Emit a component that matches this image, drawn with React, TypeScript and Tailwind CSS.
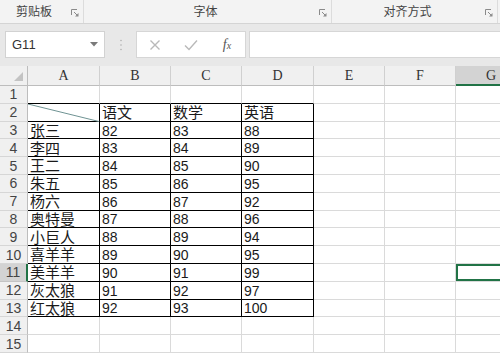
import type { ReactNode } from 'react';

type Row = [string, string, string, string];

const data: Row[] = [
  ['张三', '82', '83', '88'],
  ['李四', '83', '84', '89'],
  ['王二', '84', '85', '90'],
  ['朱五', '85', '86', '95'],
  ['杨六', '86', '87', '92'],
  ['奥特曼', '87', '88', '96'],
  ['小巨人', '88', '89', '94'],
  ['喜羊羊', '89', '90', '95'],
  ['美羊羊', '90', '91', '99'],
  ['灰太狼', '91', '92', '97'],
  ['红太狼', '92', '93', '100'],
];

const columns = ['A', 'B', 'C', 'D', 'E', 'F', 'G'];

function Launcher() {
  return (
    <svg width="8" height="8" viewBox="0 0 8 8" className="text-[#8a8a8a]">
      <path d="M0.5 6V0.5H6" fill="none" stroke="currentColor" strokeWidth="1" />
      <path d="M3 3L6.5 6.5" stroke="currentColor" strokeWidth="1" />
      <path d="M7.5 4V7.5H4Z" fill="currentColor" />
    </svg>
  );
}

function Ribbon() {
  return (
    <div className="flex h-[24px] bg-[#f3f3f3] border-b border-[#d4d4d4] text-[12px] text-[#444]">
      <div className="relative flex w-[84px] items-center border-r border-[#dcdcdc] pl-[16px]">
        剪贴板
        <span className="absolute right-[4px] bottom-[6px]">
          <Launcher />
        </span>
      </div>
      <div className="relative flex w-[248px] items-center justify-center border-r border-[#dcdcdc] pr-[4px]">
        字体
        <span className="absolute right-[4px] bottom-[6px]">
          <Launcher />
        </span>
      </div>
      <div className="relative flex w-[166px] items-center justify-center border-r border-[#dcdcdc] pr-[14px]">
        对齐方式
        <span className="absolute right-[4px] bottom-[6px]">
          <Launcher />
        </span>
      </div>
    </div>
  );
}

function FormulaBar() {
  return (
    <div className="flex h-[42px] items-start bg-[#e8e8e8] pt-[7px]">
      <div className="ml-[5px] flex h-[27px] w-[100px] items-center justify-between border border-[#d2d2d2] bg-white pl-[6px] pr-[6px] text-[13px] text-[#333]">
        <span>G11</span>
        <svg width="8" height="5" viewBox="0 0 8 5">
          <path d="M0 0H8L4 4.5Z" fill="#7a7a7a" />
        </svg>
      </div>
      <div className="flex h-[27px] w-[31px] items-center justify-center">
        <svg width="2" height="12" viewBox="0 0 2 12">
          <circle cx="1" cy="1.5" r="0.8" fill="#b0b0b0" />
          <circle cx="1" cy="6" r="0.8" fill="#b0b0b0" />
          <circle cx="1" cy="10.5" r="0.8" fill="#b0b0b0" />
        </svg>
      </div>
      <div className="flex h-[27px] w-[110px] items-center border border-[#d6d6d6] bg-white">
        <div className="flex w-[36px] justify-center">
          <svg width="12" height="12" viewBox="0 0 12 12">
            <path d="M1.5 1.5L10.5 10.5M10.5 1.5L1.5 10.5" stroke="#b9b9b9" strokeWidth="1.4" />
          </svg>
        </div>
        <div className="flex w-[36px] justify-center">
          <svg width="14" height="12" viewBox="0 0 14 12">
            <path d="M1 6.5L5 10.5L13 1.5" fill="none" stroke="#b9b9b9" strokeWidth="1.4" />
          </svg>
        </div>
        <div className="flex w-[36px] justify-center font-['Liberation_Serif',serif] italic text-[14px] text-[#555]">
          <span>
            f<span className="text-[10px]">x</span>
          </span>
        </div>
      </div>
      <div className="ml-[3px] h-[27px] flex-1 border-y border-l border-[#d6d6d6] bg-white" />
    </div>
  );
}

function Cell({
  children,
  className = '',
}: {
  children?: ReactNode;
  className?: string;
}) {
  return (
    <div
      className={`relative flex h-[17.8px] items-center overflow-visible whitespace-nowrap border-r border-b pl-[2px] pt-[2px] ${className}`}
    >
      {children}
    </div>
  );
}

export default function App() {
  const rowCount = 15;

  const renderRow = (r: number) => {
    const selectedRow = r === 11;
    const header = (
      <div
        key={`h${r}`}
        className={`flex h-[17.8px] items-center justify-center border-b pt-[1px] font-['Liberation_Sans',sans-serif] text-[14px] text-[#444] ${
          selectedRow
            ? 'bg-[#d3d3d3] border-b-[#c4c4c4] border-r-2 border-r-[#217346]'
            : 'bg-[#f0f0f0] border-b-[#d6d6d6] border-r border-r-[#bdbdbd]'
        }`}
      >
        {r}
      </div>
    );

    const cells = columns.map((col, ci) => {
      const inTable = r >= 2 && r <= 13 && ci <= 3;
      const aboveTable = r === 1 && ci <= 3;
      let content: ReactNode = null;
      let textClass = '';

      if (r === 2 && ci >= 1 && ci <= 3) {
        content = ['语文', '数学', '英语'][ci - 1];
        textClass = 'text-[15px]';
      } else if (r >= 3 && r <= 13 && ci <= 3) {
        content = data[r - 3][ci];
        textClass = ci === 0 ? 'text-[15px]' : 'text-[14px]';
      }

      const rightBorder = inTable ? 'border-r-black' : 'border-r-[#dadada]';
      const bottomBorder = inTable || aboveTable ? 'border-b-black' : 'border-b-[#dadada]';
      const selected = selectedRow && col === 'G';

      return (
        <Cell
          key={`${col}${r}`}
          className={`${rightBorder} ${bottomBorder} ${textClass} ${
            selected ? 'shadow-[inset_0_0_0_2px_#217346]' : ''
          }`}
        >
          {r === 2 && ci === 0 && (
            <svg
              className="absolute left-0 top-0"
              width="71"
              height="18"
              viewBox="0 0 71 18"
              preserveAspectRatio="none"
            >
              <path d="M0 0L71 17.5" stroke="#6f9393" strokeWidth="1" />
            </svg>
          )}
          {content}
        </Cell>
      );
    });

    return [header, ...cells];
  };

  return (
    <div className="h-[360px] w-[500px] overflow-hidden bg-white font-['Liberation_Sans','Noto_Sans_CJK_SC',sans-serif] text-[#1a1a1a]">
      <Ribbon />
      <FormulaBar />
      <div className="grid w-[527px] grid-cols-[28px_72px_71px_71px_72px_71px_71px_71px]">
        {/* column headers */}
        <div className="relative h-[20px] border-r border-b border-r-[#bdbdbd] border-b-[#bdbdbd] bg-[#f0f0f0]">
          <svg className="absolute right-[4px] bottom-[4px]" width="9" height="9" viewBox="0 0 9 9">
            <path d="M9 0V9H0Z" fill="#c3c3c3" />
          </svg>
        </div>
        {columns.map((col) => (
          <div
            key={col}
            className={`flex h-[20px] items-center justify-center font-['Liberation_Serif',serif] text-[14px] text-[#333] ${
              col === 'G'
                ? 'bg-[#d3d3d3] border-b-2 border-b-[#217346] border-r border-r-[#c4c4c4]'
                : 'bg-[#f0f0f0] border-b border-b-[#bdbdbd] border-r border-r-[#d0d0d0]'
            }`}
          >
            {col}
          </div>
        ))}
        {Array.from({ length: rowCount }, (_, i) => renderRow(i + 1))}
      </div>
    </div>
  );
}
